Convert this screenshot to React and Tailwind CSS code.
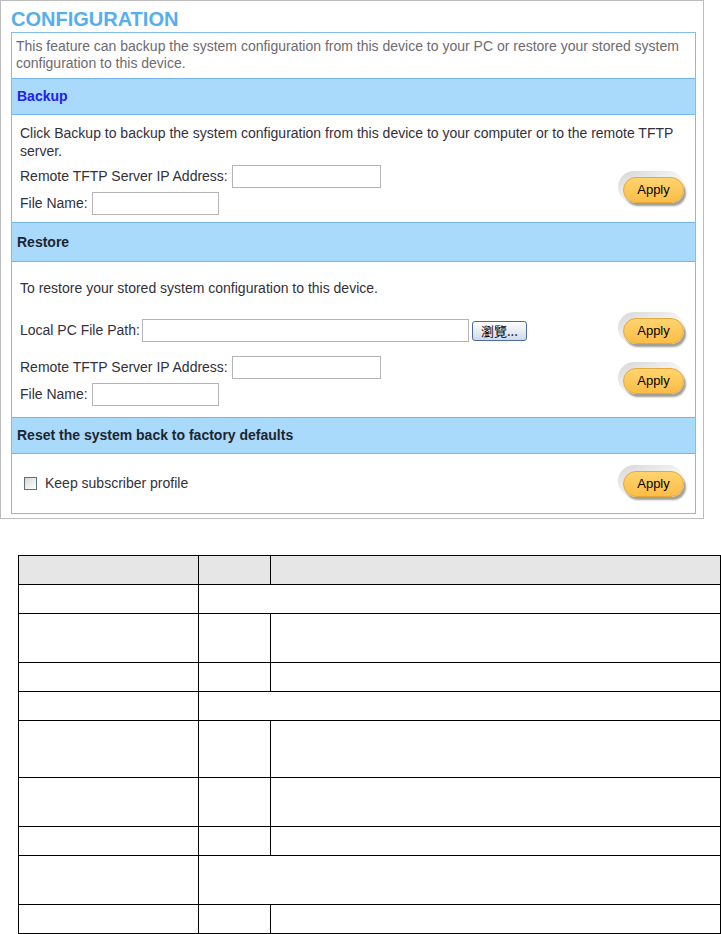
// Device web admin: CONFIGURATION page (backup / restore / factory reset)
// followed by an empty parameter table

function ApplyButton() {
  return (
    <div className="relative w-[70px] h-[37px] shrink-0">
      {/* halo behind the pill */}
      <span className="absolute left-0 top-0 w-[66px] h-[32px] rounded-full bg-gradient-to-br from-[#d6d6d6] via-[#f2f2f2] to-white" />
      <span className="absolute left-[5px] top-[6px] w-[61px] h-[26px] rounded-full bg-gradient-to-b from-[#ffd46e] to-[#fbbd45] border border-[#e6a83a] shadow-[2px_3px_2px_rgba(95,95,80,0.6)] flex items-center justify-center text-[13px] text-black">
        Apply
      </span>
    </div>
  );
}

function TextBox({ width }) {
  return <div className={`h-[23px] bg-white border border-[#b5b5b5] ${width}`} />;
}

function SectionHeader({ children, color = "text-[#1c2630]", height = "h-[37px]" }) {
  return (
    <div className={`${height} flex items-center pl-[5px] bg-[#a9d9fb] border-y border-[#74b6ef] font-bold text-[14px] ${color}`}>
      {children}
    </div>
  );
}

function TftpRows() {
  return (
    <div className="flex flex-col gap-[3px]">
      <div className="flex items-center h-[24px]">
        <span>Remote TFTP Server IP Address:</span>
        <div className="ml-[4px]"><TextBox width="w-[149px]" /></div>
      </div>
      <div className="flex items-center h-[24px]">
        <span>File Name:</span>
        <div className="ml-[4px]"><TextBox width="w-[127px]" /></div>
      </div>
    </div>
  );
}

const rows = [
  { h: "h-[29px]", span: true },
  { h: "h-[49px]" },
  { h: "h-[29px]" },
  { h: "h-[29px]", span: true },
  { h: "h-[57px]" },
  { h: "h-[49px]" },
  { h: "h-[29px]" },
  { h: "h-[49px]", span: true },
  { h: "h-[29px]" },
];

export default function App() {
  return (
    <div className="w-[721px] min-h-[934px] bg-white text-[14px] text-[#33303a] font-['Liberation_Sans',Arial,sans-serif]">

      {/* ── Config frame ───────────────────────────────────────────── */}
      <div className="w-[704px] h-[519px] border border-[#bdbdbd] pl-[10px] pr-[7px] pt-[6px]">
        <h1 className="h-[25px] leading-[24px] text-[20px] font-bold text-[#55aef0]">CONFIGURATION</h1>

        <div className="h-[482px] border border-[#80bcef] flex flex-col">
          <p className="h-[45px] pl-[4px] pt-[5px] leading-[17px] text-[#6e6a70]">
            This feature can backup the system configuration from this device to your PC or restore your stored system configuration to this device.
          </p>

          {/* Backup */}
          <SectionHeader color="text-[#2222e6]" height="h-[37px]">Backup</SectionHeader>
          <div className="h-[107px] pl-[8px] pr-[7px] pt-[9px]">
            <p className="leading-[18px]">
              Click Backup to backup the system configuration from this device to your computer or to the remote TFTP server.
            </p>
            <div className="mt-[4px] flex items-center justify-between">
              <TftpRows />
              <ApplyButton />
            </div>
          </div>

          {/* Restore */}
          <SectionHeader height="h-[40px]">Restore</SectionHeader>
          <div className="h-[155px] pl-[8px] pr-[7px] pt-[17px]">
            <p className="leading-[18px]">To restore your stored system configuration to this device.</p>
            <div className="mt-[15px] flex items-center justify-between">
              <div className="flex items-center">
                <span className="mr-[2px]">Local PC File Path:</span>
                <TextBox width="w-[327px]" />
                <button className="ml-[3px] w-[55px] h-[20px] rounded-[3px] border border-[#4a6a9c] bg-gradient-to-b from-white to-[#cfd9e8] text-[13px] leading-none text-black font-['Noto_Sans_CJK_TC',sans-serif] flex items-center justify-center">
                  瀏覽...
                </button>
              </div>
              <ApplyButton />
            </div>
            <div className="mt-[6px] flex items-center justify-between">
              <TftpRows />
              <ApplyButton />
            </div>
          </div>

          {/* Reset */}
          <SectionHeader height="h-[37px]">Reset the system back to factory defaults</SectionHeader>
          <div className="flex-1 pl-[12px] pr-[7px] flex items-center justify-between">
            <label className="flex items-center gap-[8px]">
              <span className="w-[13px] h-[13px] border border-[#5b6e82] bg-gradient-to-br from-[#d8d8d2] to-white" />
              <span>Keep subscriber profile</span>
            </label>
            <ApplyButton />
          </div>
        </div>
      </div>

      {/* ── Parameter table ────────────────────────────────────────── */}
      <table className="mt-[36px] ml-[18px] w-[703px] border-collapse table-fixed">
        <colgroup>
          <col className="w-[180px]" />
          <col className="w-[72px]" />
          <col />
        </colgroup>
        <tbody>
          <tr className="h-[29px] bg-[#e6e6e6]">
            <td className="border border-black" />
            <td className="border border-black" />
            <td className="border border-black" />
          </tr>
          {rows.map((r, i) => (
            <tr key={i} className={r.h}>
              <td className="border border-black" />
              {r.span ? (
                <td colSpan={2} className="border border-black" />
              ) : (
                <>
                  <td className="border border-black" />
                  <td className="border border-black" />
                </>
              )}
            </tr>
          ))}
        </tbody>
      </table>
    </div>
  );
}
